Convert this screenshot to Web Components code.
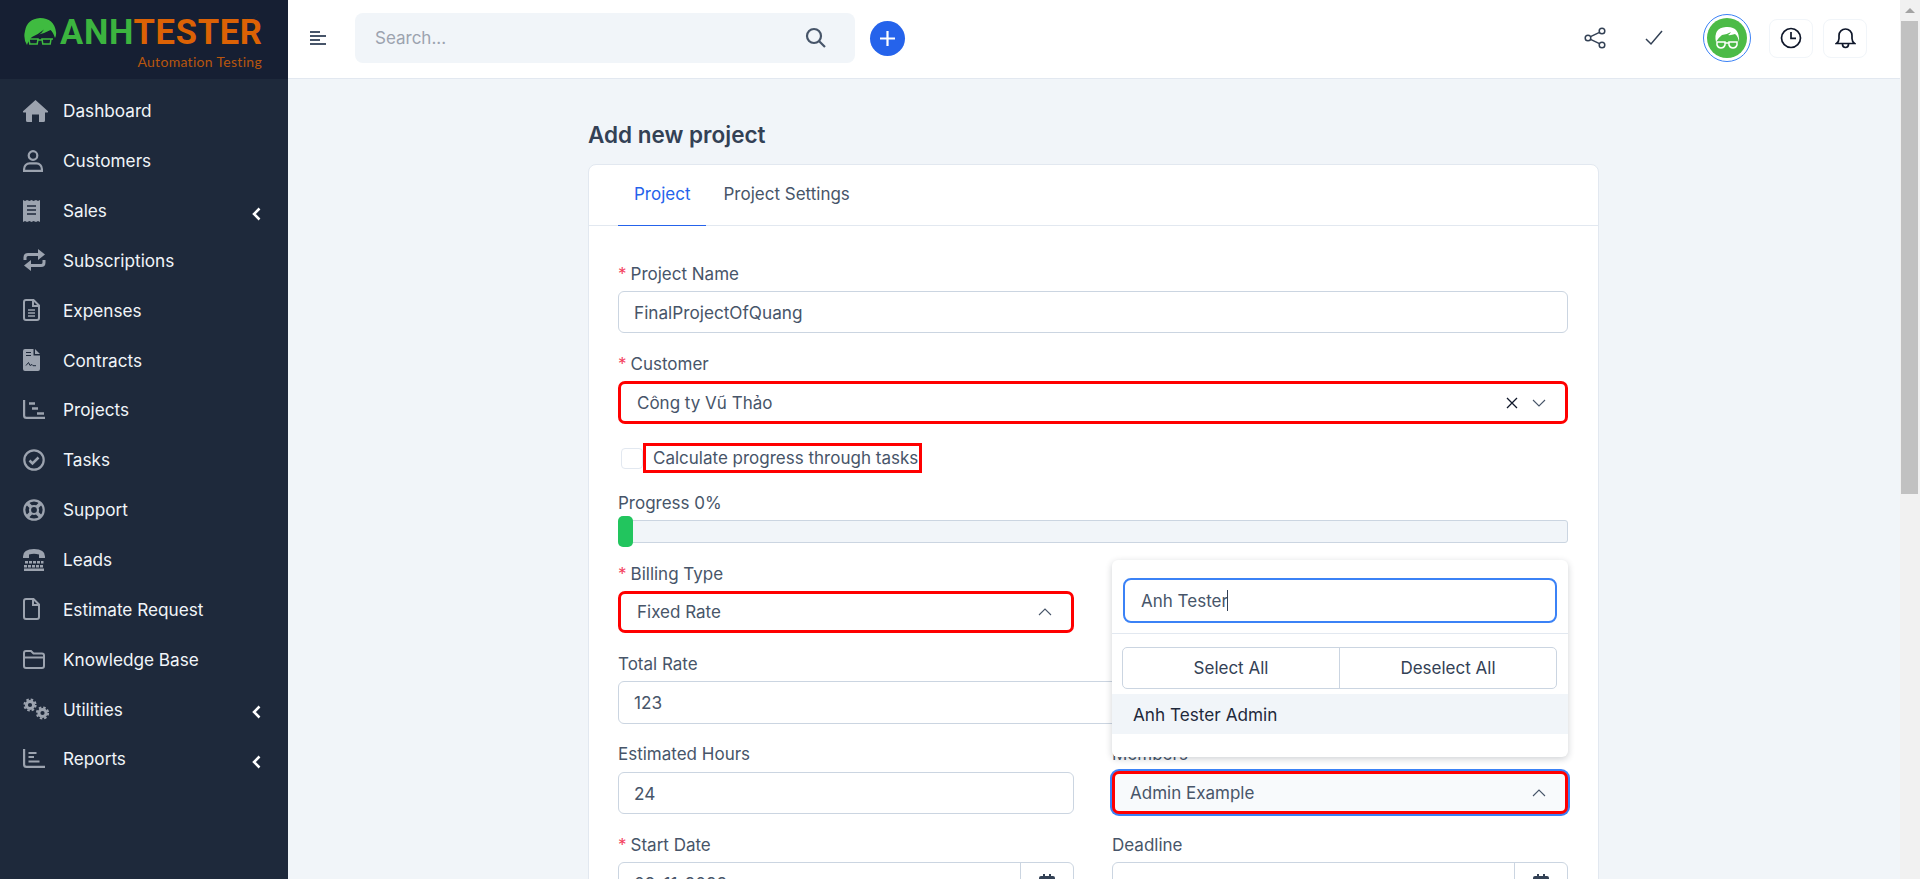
<!DOCTYPE html>
<html lang="en">
<head>
<meta charset="utf-8">
<title>Add new project</title>
<style>
  html, body { margin: 0; height: 879px; overflow: hidden; background: #f1f5f9; font-family: Inter, "Noto Sans", sans-serif; }
</style>
</head>
<body>
<app-shell></app-shell>
<script>
const navItems = [
  {label:'Dashboard', h:22, icon:'<svg width="25" height="22" viewBox="0 0 25 22"><path fill="#9ca3af" d="M12.5 0 25 11.3q.2 1.2-1 1.2h-2v8q0 1.5-1.5 1.5H16v-7.5H9V22H4.500Q3 22 3 20.500v-8H1q-1.200 0-1-1.200Z"/></svg>'},
  {label:'Customers', h:22, icon:'<svg width="20" height="22" viewBox="0 0 20 22" fill="none" stroke="#9ca3af" stroke-width="2.200"><circle cx="10" cy="5.500" r="4.300"/><path d="M1.100 20.900v-2a5.500 5.500 0 0 1 5.500-5.500h6.800a5.500 5.500 0 0 1 5.500 5.500v2Z"/></svg>'},
  {label:'Sales', h:22, arrow:true, icon:'<svg width="17" height="22" viewBox="0 0 17 22"><path fill="#9ca3af" d="M0 0l2 1 2-1 2.500 1L8.500 0l2 1 2.500-1 2 1 2-1v22l-2-1-2 1-2.500-1-2 1-2-1L4 22l-2-1-2 1Z"/><path stroke="#1e293b" stroke-width="1.500" d="M4 6h9M4 10h9M4 14h9"/></svg>'},
  {label:'Subscriptions', h:24, icon:'<svg width="23" height="24" viewBox="0 0 23 24" fill="none" stroke="#9ca3af" stroke-width="3"><path d="M2 12V9.500Q2 6.500 5 6.500H18"/><path d="M21 12v2.500q0 3-3 3H5"/><path fill="#9ca3af" stroke="none" d="M15 1l7 5.500-7 5.500ZM8 12l-7 5.500 7 5.500Z"/></svg>'},
  {label:'Expenses', h:22, icon:'<svg width="17" height="22" viewBox="0 0 17 22" fill="none" stroke="#9ca3af" stroke-width="2"><path d="M3 1h7.500L16 6.500V19a2 2 0 0 1-2 2H3a2 2 0 0 1-2-2V3a2 2 0 0 1 2-2Z"/><path d="M10 1v6h6"/><path stroke-width="1.500" d="M5 11h7M5 14h7M5 17h7"/></svg>'},
  {label:'Contracts', h:22, icon:'<svg width="17" height="22" viewBox="0 0 17 22"><path fill="#9ca3af" d="M2 0h8.500v6.500H17V20a2 2 0 0 1-2 2H2a2 2 0 0 1-2-2V2a2 2 0 0 1 2-2ZM12 0l5 5h-5Z"/><path fill="none" stroke="#1e293b" stroke-width="1" d="M3 16.500l2.500-3 1.500 3 2-1 1 1.200h3"/><path stroke="#1e293b" stroke-width="1.200" d="M3 3.500h5M3 6.500h5"/></svg>'},
  {label:'Projects', h:20, icon:'<svg width="22" height="19" viewBox="0 0 22 19" fill="none" stroke="#9ca3af"><path stroke-width="2.200" d="M1.100 0v15.500q0 2.400 2.400 2.400H22"/><path stroke-width="2.500" d="M6 3.500h6M9 8.500h6M14 13.500h7"/></svg>'},
  {label:'Tasks', h:22, icon:'<svg width="22" height="22" viewBox="0 0 22 22" fill="none" stroke="#9ca3af"><circle cx="11" cy="11" r="9.700" stroke-width="2.200"/><path stroke-width="2.500" d="M6.500 11.500l3 3 6-6"/></svg>'},
  {label:'Support', h:22, icon:'<svg width="22" height="22" viewBox="0 0 22 22" fill="none" stroke="#9ca3af"><circle cx="11" cy="11" r="9.700" stroke-width="2.200"/><circle cx="11" cy="11" r="4" stroke-width="2.200"/><path stroke-width="3.600" d="M4 4l4 4M18 4l-4 4M4 18l4-4M18 18l-4-4"/></svg>'},
  {label:'Leads', h:22, icon:'<svg width="22" height="22" viewBox="0 0 22 22"><path fill="#9ca3af" d="M0 7.500Q0 0 11 0t11 7.500V9h-6V5.500Q11 4 6 5.500V9H0Z"/><g fill="#9ca3af"><rect x="2" y="12" width="3" height="2.500"/><rect x="6" y="12" width="3" height="2.500"/><rect x="10" y="12" width="3" height="2.500"/><rect x="14" y="12" width="3" height="2.500"/><rect x="18" y="12" width="2.500" height="2.500"/><rect x="1" y="16" width="3" height="2.500"/><rect x="5" y="16" width="3" height="2.500"/><rect x="9" y="16" width="3" height="2.500"/><rect x="13" y="16" width="3" height="2.500"/><rect x="17" y="16" width="3" height="2.500"/><rect x="1" y="19.500" width="20" height="2.500"/></g></svg>'},
  {label:'Estimate Request', h:22, icon:'<svg width="17" height="22" viewBox="0 0 17 22" fill="none" stroke="#9ca3af" stroke-width="2"><path d="M3 1h7.500L16 6.500V19a2 2 0 0 1-2 2H3a2 2 0 0 1-2-2V3a2 2 0 0 1 2-2Z"/><path d="M10 1v6h6"/></svg>'},
  {label:'Knowledge Base', h:20, icon:'<svg width="22" height="19" viewBox="0 0 22 19" fill="none" stroke="#9ca3af" stroke-width="2"><path d="M3 1h5l2.500 2.500H19a2 2 0 0 1 2 2V16a2 2 0 0 1-2 2H3a2 2 0 0 1-2-2V3a2 2 0 0 1 2-2Z"/><path d="M1 7.500h20"/></svg>'},
  {label:'Utilities', h:22, arrow:true, icon:'<svg width="27" height="22" viewBox="0 0 27 22" fill="none" stroke="#9ca3af"><circle cx="7" cy="7" r="3.600" stroke-width="3"/><circle cx="7" cy="7" r="5.600" stroke-width="2" stroke-dasharray="2.500 1.900"/><circle cx="19.500" cy="15" r="3.600" stroke-width="3"/><circle cx="19.500" cy="15" r="5.600" stroke-width="2" stroke-dasharray="2.500 1.900"/></svg>'},
  {label:'Reports', h:20, arrow:true, icon:'<svg width="22" height="19" viewBox="0 0 22 19" fill="none" stroke="#9ca3af"><path stroke-width="2.200" d="M1.100 0v15.500q0 2.400 2.400 2.400H22"/><path stroke-width="2" d="M5.500 4h8M5.500 8h5.500M5.500 12.500h11"/></svg>'}
];

class NavItem extends HTMLElement {
  constructor() {
    super();
    this.attachShadow({ mode: 'open' });
  }

  connectedCallback() {
    const arrow = this.hasAttribute('arrow');
    this.shadowRoot.innerHTML = `
      <style>
        :host { display: flex; align-items: center; height: 49.85px; padding-left: 23px; color: #f1f5f9; font-size: 17.2px; }
        .icon { width: 40px; flex: none; display: flex; align-items: center; }
        .label { flex: 1; }
        .arrow { width: 9px; height: 14px; margin: 6px 27px 0 0; }
      </style>
      <span class="icon"><slot></slot></span>
      <span class="label">${this.getAttribute('label')}</span>
      ${arrow ? '<svg class="arrow" viewBox="0 0 9 14" fill="none" stroke="#fff" stroke-width="2.500"><path d="M7.500 1.500 2 7l5.500 5.500"/></svg>' : ''}
    `;
  }
}

class BrandLogo extends HTMLElement {
  constructor() {
    super();
    this.attachShadow({ mode: 'open' });
  }

  connectedCallback() {
    this.shadowRoot.innerHTML = `
      <style>
        :host { display: flex; height: 79px; box-sizing: border-box; padding: 17px 0 0 24px; background: #161f33; position: relative; }
        .head { width: 33px; height: 30px; flex: none; }
        .words { margin-left: 3px; width: 205px; }
        .name { font: 700 34.500px/30px Roboto, sans-serif; letter-spacing: 0.700px; white-space: nowrap; color: #3cb43f; }
        .name b { font-weight: 700; color: #dc6205; }
        .tag { font: 400 14px/18px Lato, sans-serif; color: #b8560e; text-align: right; margin: 6px 3px 0 0; letter-spacing: .3px; }
        .bug { position: absolute; left: 240px; top: 14px; width: 22px; height: 16px; }
      </style>
      <svg class="head" viewBox="0 0 33 30">
        <path fill="#3fbb40" d="M3 28Q-1 22 1 14 3 2 16 1 30 1 32 15q.5 3-1 6-2-6-4.500-8-5.500 3-11.500 4.500 3-1.500 5-5-6 5-12 7.500-3 2-3.500 5Q4 25 3 28Z"/>
        <path fill="none" stroke="#3fbb40" stroke-width="1.500" d="M5 22h9l-.8 5H5.800ZM18 22h9l-.8 5h-7.400ZM14 23h4M3 22h2M27 22h2"/>
      </svg>
      <div class="words">
        <div class="name">ANH<b>TESTER</b></div>
        <div class="tag">Automation Testing</div>
      </div>
      <svg class="bug" viewBox="0 0 22 16" fill="none" stroke="#20242c" stroke-width="1">
        <path d="M4 0l4 5M18 0l-5 5"/><path fill="#20242c" stroke="none" d="M8 9.500h1.500V11H8ZM12 9.500h1.500V11H12Z"/>
      </svg>
    `;
  }
}

class AppSidebar extends HTMLElement {
  constructor() {
    super();
    this.attachShadow({ mode: 'open' });
  }

  connectedCallback() {
    this.shadowRoot.innerHTML = `
      <style>
        :host { display: block; width: 288px; flex: none; background: #1e293b; height: 879px; }
        nav { padding-top: 7px; }
      </style>
      <brand-logo></brand-logo>
      <nav>
        ${navItems.map(item => `<nav-item label="${item.label}"${item.arrow ? ' arrow' : ''}>${item.icon}</nav-item>`).join('')}
      </nav>
    `;
  }
}

class TopBar extends HTMLElement {
  constructor() {
    super();
    this.attachShadow({ mode: 'open' });
  }

  connectedCallback() {
    this.shadowRoot.innerHTML = `
      <style>
        :host { display: flex; align-items: center; height: 79px; box-sizing: border-box; background: #fff; border-bottom: 1px solid #e2e8f0; padding: 0 0 2px 22px; }
        .burger { width: 16px; height: 14px; flex: none; }
        .search { margin-left: 29px; width: 500px; height: 50px; flex: none; box-sizing: border-box; background: #f1f5f9; border-radius: 8px; display: flex; align-items: center; justify-content: space-between; padding: 0 29px 0 20px; color: #9ca3af; font-size: 17px; }
        .search svg { margin-bottom: 2px; }
        .plus { margin-left: 15px; width: 35px; height: 35px; flex: none; border-radius: 50%; background: #2563eb; display: flex; align-items: center; justify-content: center; }
        .right { margin-left: auto; display: flex; align-items: center; padding-right: 33px; }
        .share { margin-right: 39px; }
        .check { margin-right: 40px; }
        .avatar { width: 48px; height: 48px; box-sizing: border-box; border: 1px solid #3b82f6; border-radius: 50%; padding: 3px; margin-right: 18px; }
        .box { width: 44px; height: 39px; box-sizing: border-box; border: 1px solid #f1f5f9; border-radius: 8px; display: flex; align-items: center; justify-content: center; margin-left: 10px; }
        .avatar + .box { margin-left: 0; }
      </style>
      <svg class="burger" viewBox="0 0 16 14" fill="none" stroke="#475569" stroke-width="2"><path d="M0 1h10M0 5h16M0 9h10M0 13h16"/></svg>
      <div class="search">
        <span>Search...</span>
        <svg width="21" height="21" viewBox="0 0 21 21" fill="none" stroke="#475569" stroke-width="2.200"><circle cx="9" cy="9" r="7"/><path d="M14 14l6 6"/></svg>
      </div>
      <div class="plus"><svg width="17" height="17" viewBox="0 0 17 17" stroke="#fff" stroke-width="2.200"><path d="M8.500 1v15M1 8.500h15"/></svg></div>
      <div class="right">
        <svg class="share" width="22" height="22" viewBox="0 0 22 22" fill="none" stroke="#334155" stroke-width="1.500"><circle cx="4" cy="11" r="2.800"/><circle cx="18" cy="4" r="2.800"/><circle cx="18" cy="18" r="2.800"/><path d="M6.500 9.700 15.500 5.300M6.500 12.300l9 4.400"/></svg>
        <svg class="check" width="18" height="16" viewBox="0 0 18 16" fill="none" stroke="#334155" stroke-width="1.500"><path d="M1 9l5 5L17 1"/></svg>
        <div class="avatar">
          <svg width="40" height="40" viewBox="0 0 40 40"><circle cx="20" cy="20" r="20" fill="#4cbb47"/><path fill="#fff" d="M9 24Q6 10 19 9q14-1 13 15-1-6-4-8-4 1.500-7 1 2-1 3-3-5 3-9 3-4 3-6 7Z"/><path fill="none" stroke="#fff" stroke-width="1.500" d="M10 24h8v3q-1 3-4 3t-4-3ZM22 24h8v3q-1 3-4 3t-4-3ZM18 25h4"/></svg>
        </div>
        <div class="box"><svg width="22" height="22" viewBox="0 0 22 22" fill="none" stroke="#0f172a" stroke-width="1.700"><circle cx="11" cy="11" r="9.500"/><path d="M11 5v6.300h5"/></svg></div>
        <div class="box"><svg width="21" height="22" viewBox="0 0 21 22" fill="none" stroke="#0f172a" stroke-width="1.700"><path d="M1.500 16.500q2.500-2 2.500-5V8.500a6.500 6.500 0 0 1 13 0v3q0 3 2.500 5Z"/><path d="M7.500 17q0 3.500 3 3.500t3-3.500"/></svg></div>
      </div>
    `;
  }
}

class AppScrollbar extends HTMLElement {
  constructor() {
    super();
    this.attachShadow({ mode: 'open' });
  }

  connectedCallback() {
    this.shadowRoot.innerHTML = `
      <style>
        :host { display: block; width: 20px; flex: none; height: 879px; background: #f1f1f1; box-sizing: border-box; padding: 8px 2px 0 1px; }
        .up { width: 0; height: 0; margin: 0 auto 8px; border: 5px solid transparent; border-top: 0; border-bottom: 5px solid #a3a3a3; }
        .thumb { height: 473px; background: #c1c1c1; }
      </style>
      <div class="up"></div>
      <div class="thumb"></div>
    `;
  }
}

class FormField extends HTMLElement {
  constructor() {
    super();
    this.attachShadow({ mode: 'open' });
  }

  connectedCallback() {
    this.shadowRoot.innerHTML = `
      <style>
        :host { display: block; position: relative; margin-bottom: var(--gap, 19px); }
        label { display: block; font-size: 17px; line-height: 24px; color: #475569; margin-bottom: var(--label-gap, 5px); white-space: nowrap; }
        i { font-style: normal; color: #f43f5e; margin-right: 4px; }
      </style>
      <label>${this.hasAttribute('required') ? '<i>*</i>' : ''}${this.getAttribute('label')}</label>
      <slot></slot>
    `;
  }
}

class TextInput extends HTMLElement {
  constructor() {
    super();
    this.attachShadow({ mode: 'open' });
  }

  connectedCallback() {
    const calendar = this.hasAttribute('calendar');
    this.shadowRoot.innerHTML = `
      <style>
        :host { display: flex; align-items: center; height: var(--h, 42px); box-sizing: border-box; border: 1px solid #cbd5e1; border-radius: 6px; background: #fff; font-size: 17.2px; color: #475569; padding-left: 15px; }
        span { flex: 1; }
        .addon { flex: none; width: 52px; height: 100%; border-left: 1px solid #cbd5e1; display: flex; justify-content: center; align-items: center; }
      </style>
      <span>${this.getAttribute('value') || ''}</span>
      ${calendar ? `<div class="addon"><svg width="16" height="18" viewBox="0 0 16 18"><path fill="#334155" d="M4 0h2v2h4V0h2v2h2a2 2 0 0 1 2 2v2H0V4a2 2 0 0 1 2-2h2ZM0 7h16v9a2 2 0 0 1-2 2H2a2 2 0 0 1-2-2Z"/></svg></div>` : ''}
    `;
  }
}

class SelectBox extends HTMLElement {
  constructor() {
    super();
    this.attachShadow({ mode: 'open' });
  }

  connectedCallback() {
    const open = this.hasAttribute('open');
    const path = open ? 'M1 7l6-6 6 6' : 'M1 1l6 6 6-6';
    this.shadowRoot.innerHTML = `
      <style>
        :host { display: flex; align-items: center; height: var(--h, 42px); box-sizing: border-box; border: 3px solid #f00; border-radius: 7px; font-size: 17px; color: #475569; padding: 0 19px 0 var(--pad, 16px); background: var(--bg, #fff); box-shadow: var(--ring, none); }
        span { flex: 1; }
        .x { margin-right: 14px; }
      </style>
      <span>${this.getAttribute('value')}</span>
      ${this.hasAttribute('clearable') ? '<svg class="x" width="12" height="12" viewBox="0 0 12 12" stroke="#0f172a" stroke-width="1.300"><path d="M1 1l10 10M11 1 1 11"/></svg>' : ''}
      <svg width="14" height="8" viewBox="0 0 14 8" fill="none" stroke="#475569" stroke-width="1.100"><path d="${path}"/></svg>
    `;
  }
}

class MemberDropdown extends HTMLElement {
  constructor() {
    super();
    this.attachShadow({ mode: 'open' });
  }

  connectedCallback() {
    this.shadowRoot.innerHTML = `
      <style>
        :host { display: block; position: absolute; left: 0; right: 0; bottom: 57px; height: 197px; box-sizing: border-box; background: #fff; border-radius: 6px; box-shadow: 0 2px 7px rgba(15,23,42,.2); font-size: 17px; }
        .top { height: 74px; box-sizing: border-box; padding: 18px 11px 0; border-bottom: 1px solid #e2e8f0; }
        .find { height: 45px; box-sizing: border-box; border: 2px solid #3b82f6; border-radius: 8px; display: flex; align-items: center; padding-left: 16px; color: #475569; }
        .caret { width: 1.500px; height: 21px; background: #334155; margin-left: -1px; }
        .btns { display: flex; margin: 13px 11px 5px 10px; height: 42px; box-sizing: border-box; border: 1px solid #cbd5e1; border-radius: 5px; color: #334155; }
        .btns div { flex: 1; display: flex; align-items: center; justify-content: center; }
        .btns div + div { border-left: 1px solid #cbd5e1; }
        .opt { height: 40px; background: #f1f5f9; display: flex; align-items: center; padding-left: 21px; color: #1e293b; font-size: 17.2px; }
      </style>
      <div class="top"><div class="find"><span>Anh Tester</span><span class="caret"></span></div></div>
      <div class="btns"><div>Select All</div><div>Deselect All</div></div>
      <div class="opt">Anh Tester Admin</div>
    `;
  }
}

class ProjectForm extends HTMLElement {
  constructor() {
    super();
    this.attachShadow({ mode: 'open' });
  }

  connectedCallback() {
    this.shadowRoot.innerHTML = `
      <style>
        :host { display: block; width: 1011px; }
        h1 { margin: 0 0 15px; font-size: 22.5px; line-height: 28px; font-weight: 600; color: #334155; }
        .card { background: #fff; border: 1px solid #e2e8f0; border-radius: 8px; }
        .tabs { display: flex; gap: 1px; height: 60px; padding-left: 29px; border-bottom: 1px solid #e2e8f0; font-size: 17px; color: #475569; }
        .tabs div { padding: 0 16px 2px; display: flex; align-items: center; margin-bottom: -1px; border-bottom: 1px solid transparent; }
        .tabs .on { color: #2563eb; border-bottom-color: #2563eb; }
        form { display: block; padding: 36px 30px 36px 29px; }
        .two { display: grid; grid-template-columns: 456px 456px; column-gap: 38px; }
        .check { display: flex; align-items: center; margin-bottom: 18px; padding-left: 3px; }
        .box { width: 22px; height: 21px; box-sizing: border-box; border: 1px solid #e2e8f0; border-radius: 4px; }
        .outline { height: 30px; box-sizing: border-box; border: 3px solid #f00; padding: 0 1px 0 7px; display: flex; align-items: center; font-size: 17px; color: #475569; white-space: nowrap; }
        .track { position: relative; height: 23px; box-sizing: border-box; background: #f1f5f9; border: 1px solid #cbd5e1; border-radius: 3px; }
        .handle { position: absolute; left: -1px; top: -5px; width: 15px; height: 31px; background: #22c55e; border-radius: 5px; }
      </style>
      <h1>Add new project</h1>
      <div class="card">
        <div class="tabs"><div class="on">Project</div><div>Project Settings</div></div>
        <form>
          <form-field required label="Project Name"><text-input value="FinalProjectOfQuang"></text-input></form-field>
          <form-field required label="Customer" style="--h:43px"><select-box clearable value="Công ty Vũ Thảo"></select-box></form-field>
          <div class="check"><div class="box"></div><div class="outline">Calculate progress through tasks</div></div>
          <form-field label="Progress 0%"><div class="track"><div class="handle"></div></div></form-field>
          <div class="two">
            <form-field required label="Billing Type"><select-box open value="Fixed Rate"></select-box></form-field>
            <div></div>
          </div>
          <form-field label="Total Rate" style="--h:43px;--gap:18px"><text-input value="123"></text-input></form-field>
          <div class="two">
            <form-field label="Estimated Hours" style="--label-gap:6px"><text-input value="24"></text-input></form-field>
            <form-field label="Members" style="--label-gap:5px;--h:43px;--pad:15px;--bg:#f8fafc;--ring:0 0 0 2px #3b82f6">
              <select-box open value="Admin Example"></select-box>
              <member-dropdown></member-dropdown>
            </form-field>
          </div>
          <div class="two">
            <form-field required label="Start Date"><text-input calendar value="09-11-2023"></text-input></form-field>
            <form-field label="Deadline"><text-input calendar></text-input></form-field>
          </div>
        </form>
      </div>
    `;
  }
}

class AppShell extends HTMLElement {
  constructor() {
    super();
    this.attachShadow({ mode: 'open' });
  }

  connectedCallback() {
    this.shadowRoot.innerHTML = `
      <style>
        :host { display: flex; height: 879px; overflow: hidden; }
        main { flex: 1; min-width: 0; }
        .content { padding: 42px 0 0 300px; }
      </style>
      <app-sidebar></app-sidebar>
      <main>
        <top-bar></top-bar>
        <div class="content"><project-form></project-form></div>
      </main>
      <app-scrollbar></app-scrollbar>
    `;
  }
}

customElements.define('nav-item', NavItem);
customElements.define('brand-logo', BrandLogo);
customElements.define('app-sidebar', AppSidebar);
customElements.define('top-bar', TopBar);
customElements.define('app-scrollbar', AppScrollbar);
customElements.define('form-field', FormField);
customElements.define('text-input', TextInput);
customElements.define('select-box', SelectBox);
customElements.define('member-dropdown', MemberDropdown);
customElements.define('project-form', ProjectForm);
customElements.define('app-shell', AppShell);
</script>
</body>
</html>
